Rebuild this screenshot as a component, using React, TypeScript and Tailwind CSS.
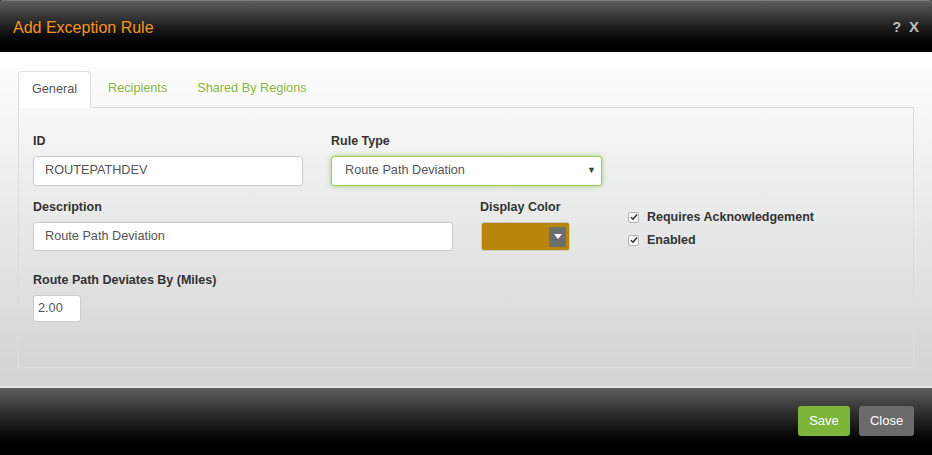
import React from 'react';

const FONT = { fontFamily: '"Liberation Sans", Arial, sans-serif' };

function Check() {
  return (
    <span className="w-[11px] h-[11px] rounded-[2px] border border-[#b5b5b5] bg-[#f4f4f4] flex items-center justify-center">
      <svg width="8" height="8" viewBox="0 0 8 8">
        <path d="M1 4.2 L3 6.2 L7 1.5" stroke="#333" strokeWidth="1.5" fill="none" />
      </svg>
    </span>
  );
}

export default function App() {
  return (
    <div className="w-[932px] h-[455px] flex flex-col bg-[#333] overflow-hidden" style={FONT}>
      {/* Header */}
      <div className="h-[52px] shrink-0 flex items-center justify-between pl-[13px] pr-[13px] border-t border-[#7a7a7a] rounded-t-[3px] bg-gradient-to-b from-[#5e5e5e] to-[#000]">
        <span className="text-[16px] text-[#f7941d] pt-[2px]">Add Exception Rule</span>
        <div className="flex items-center gap-[8px] text-[#bdbdbd] font-bold text-[14px] pt-[2px]">
          <span>?</span>
          <span className="text-[15px]">X</span>
        </div>
      </div>

      {/* Body */}
      <div className="h-[336px] shrink-0 px-[18px] pt-[19px] bg-gradient-to-b from-[#ffffff] to-[#d2d3d3] border-b-2 border-[#e4e4e4]">
        <div className="flex h-[36px] text-[12.7px]">
          <div className="w-[73px] h-[37px] bg-white border border-[#ddd] border-b-0 rounded-t-[4px] flex items-center justify-center text-[#555] z-10">
            General
          </div>
          <div className="px-[15px] ml-[2px] flex items-center text-[#8cb63c]">Recipients</div>
          <div className="px-[15px] flex items-center text-[#8cb63c]">Shared By Regions</div>
        </div>
        <div className="h-[261px] border border-[#dcdcdc] px-[14px] pt-[23px]">
          {/* Row 1 */}
          <div className="flex gap-[28px]">
            <div className="w-[270px]">
              <div className="h-[20px] leading-[20px] text-[12.5px] font-bold text-[#333] mb-[5px]">ID</div>
              <div className="h-[30px] bg-white border border-[#ccc] rounded-[3px] flex items-center pl-[11px] text-[12.7px] text-[#555]">
                ROUTEPATHDEV
              </div>
            </div>
            <div className="w-[271px]">
              <div className="h-[20px] leading-[20px] text-[12.5px] font-bold text-[#333] mb-[5px]">Rule Type</div>
              <div className="h-[30px] bg-white border border-[#9bcc5a] rounded-[3px] shadow-[0_0_5px_rgba(130,190,60,0.7)] flex items-center justify-between pl-[13px] pr-[5px] text-[12.7px] text-[#555]">
                <span>Route Path Deviation</span>
                <span className="text-[9px] text-[#444]">▼</span>
              </div>
            </div>
          </div>

          {/* Row 2 */}
          <div className="flex mt-[11px]">
            <div className="w-[420px]">
              <div className="h-[20px] leading-[20px] text-[12.5px] font-bold text-[#333] mb-[5px]">Description</div>
              <div className="h-[29px] bg-white border border-[#ccc] rounded-[3px] flex items-center pl-[11px] text-[12.7px] text-[#555]">
                Route Path Deviation
              </div>
            </div>
            <div className="w-[90px] ml-[27px]">
              <div className="h-[20px] leading-[20px] text-[12.5px] font-bold text-[#333] mb-[5px]">Display Color</div>
              <div className="ml-[1px] w-[89px] h-[29px] bg-[#b8860b] border border-[#c9c9c9] rounded-[3px] flex items-center justify-end pr-[3px]">
                <span className="w-[17px] h-[20px] bg-[#6e6e6e] rounded-[2px] flex items-center justify-center">
                  <svg width="8" height="5" viewBox="0 0 8 5"><path d="M0 0 H8 L4 5 Z" fill="#fff" /></svg>
                </span>
              </div>
            </div>
            <div className="ml-[58px] pt-[12px] flex flex-col gap-[7px] text-[12.5px] font-bold text-[#333]">
              <div className="flex items-center gap-[8px] h-[16px]">
                <Check />
                <span>Requires Acknowledgement</span>
              </div>
              <div className="flex items-center gap-[8px] h-[16px]">
                <Check />
                <span>Enabled</span>
              </div>
            </div>
          </div>

          {/* Row 3 */}
          <div className="mt-[19px]">
            <div className="h-[20px] leading-[20px] text-[12.5px] font-bold text-[#333] mb-[5px]">Route Path Deviates By (Miles)</div>
            <div className="w-[48px] h-[27px] bg-white border border-[#ccc] rounded-[3px] flex items-center pl-[4px] text-[12.7px] text-[#555]">
              2.00
            </div>
          </div>
        </div>
      </div>

      {/* Footer */}
      <div className="flex-1 flex items-center justify-end gap-[9px] pr-[18px] pb-[2px] bg-gradient-to-b from-[#5e5e5e] to-[#000]">
        <button className="w-[52px] h-[30px] bg-[#7db43a] rounded-[3px] text-white text-[13px]">Save</button>
        <button className="w-[55px] h-[30px] bg-[#6b6b6b] rounded-[3px] text-white text-[13px]">Close</button>
      </div>
    </div>
  );
}
